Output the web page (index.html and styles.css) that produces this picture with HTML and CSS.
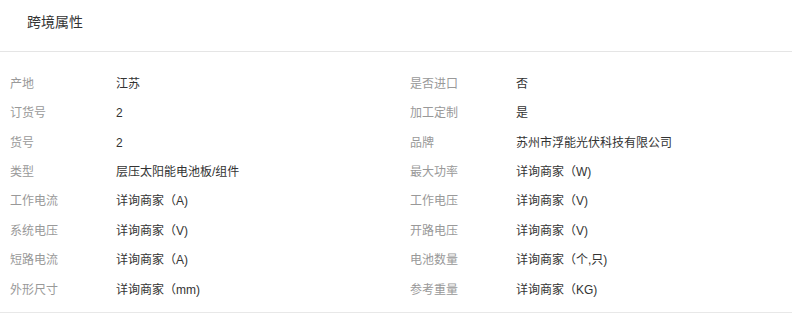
FILE: index.html
```html
<!DOCTYPE html>
<html lang="zh-CN">
<head>
<meta charset="utf-8">
<title>跨境属性</title>
<link rel="stylesheet" href="styles.css">
</head>
<body>
<section class="panel">
  <div class="panel-head"><h2 class="panel-title">跨境属性</h2></div>
  <dl class="attrs">
    <dt>产地</dt><dd>江苏</dd><dt>是否进口</dt><dd>否</dd>
    <dt>订货号</dt><dd>2</dd><dt>加工定制</dt><dd>是</dd>
    <dt>货号</dt><dd>2</dd><dt>品牌</dt><dd>苏州市浮能光伏科技有限公司</dd>
    <dt>类型</dt><dd>层压太阳能电池板/组件</dd><dt>最大功率</dt><dd>详询商家（W)</dd>
    <dt>工作电流</dt><dd>详询商家（A)</dd><dt>工作电压</dt><dd>详询商家（V)</dd>
    <dt>系统电压</dt><dd>详询商家（V)</dd><dt>开路电压</dt><dd>详询商家（V)</dd>
    <dt>短路电流</dt><dd>详询商家（A)</dd><dt>电池数量</dt><dd>详询商家（个,只)</dd>
    <dt>外形尺寸</dt><dd>详询商家（mm)</dd><dt>参考重量</dt><dd>详询商家（KG)</dd>
  </dl>
</section>
</body>
</html>
```

FILE: styles.css
```css
html, body {
  margin: 0;
  padding: 0;
  background: #fff;
}
body {
  font-family: "Liberation Sans", "Noto Sans CJK SC", sans-serif;
  color: #333;
}
.panel {
  width: 792px;
  border-bottom: 1px solid #e8e8e8;
}
.panel-head {
  height: 52px;
  box-sizing: border-box;
  padding: 12px 0 0 27px;
  border-bottom: 1px solid #e5e5e5;
}
.panel-title {
  margin: 0;
  font-size: 14px;
  font-weight: normal;
  line-height: 20px;
  color: #333;
}
.attrs {
  margin: 0;
  padding: 17px 0 8px 10px;
  display: grid;
  grid-template-columns: 106px 294px 106px 1fr;
  grid-auto-rows: 29.43px;
  align-items: center;
  font-size: 12px;
  line-height: 18px;
}
.attrs dt {
  color: #999;
}
.attrs dd {
  margin: 0;
  color: #333;
}
```
